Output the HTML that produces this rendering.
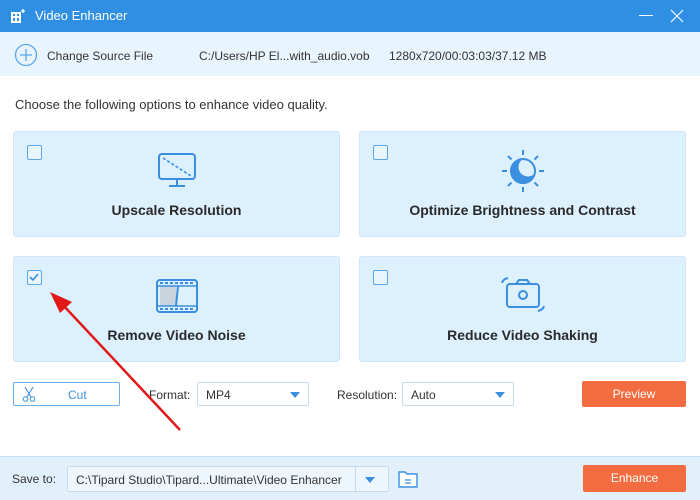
<!DOCTYPE html>
<html><head><meta charset="utf-8"><style>
*{box-sizing:border-box;margin:0;padding:0}
body{width:700px;height:500px;overflow:hidden;background:#fff;font-family:"Liberation Sans",sans-serif;position:relative;color:#333}
.abs{position:absolute}
.title{left:0;top:0;width:700px;height:32px;background:#2f8fe3;color:#fff;font-size:13px}
.src{left:0;top:32px;width:700px;height:44px;background:#e9f5fe;font-size:12px;color:#333}
.card{background:#dcf0fe;border:1px solid #cfe6f8;border-radius:3px;width:327px;height:106px}
.card .cb{position:absolute;left:13px;top:13px;width:15px;height:15px;border:1.5px solid #5aa8ec;border-radius:2px;background:#e9f6ff}
.card .lbl{position:absolute;left:0;right:0;top:70px;text-align:center;font-weight:bold;font-size:14px;color:#2a2a2a}
.card svg{position:absolute;left:50%;top:18px;transform:translateX(-50%)}
.sel{border:1px solid #c8daea;border-radius:2px;background:#fff;height:24px;font-size:12px;padding:5px 8px}
.tri{position:absolute;right:8px;top:9px;width:0;height:0;border-left:5px solid transparent;border-right:5px solid transparent;border-top:6px solid #3a8fe0}
.btn{background:#f36c3f;color:#fff;font-size:12px;text-align:center;border-radius:2px}
</style></head><body>
<div class="abs title">
 <svg class="abs" style="left:10px;top:8px" width="16" height="16" viewBox="0 0 16 16"><rect x="1" y="4" width="10" height="11" fill="#fff"/><rect x="3" y="6" width="2" height="2" fill="#2f8fe3"/><rect x="7" y="6" width="2" height="2" fill="#2f8fe3"/><rect x="3" y="10" width="2" height="3" fill="#2f8fe3"/><rect x="7" y="10" width="2" height="3" fill="#2f8fe3"/><path d="M13 1v4M11 3h4" stroke="#fff" stroke-width="1.3"/></svg>
 <div class="abs" style="left:35px;top:8px">Video Enhancer</div>
 <div class="abs" style="left:639px;top:15px;width:14px;height:1px;background:#fff"></div>
 <svg class="abs" style="left:670px;top:9px" width="14" height="14" viewBox="0 0 14 14"><path d="M1 1L13 13M13 1L1 13" stroke="#fff" stroke-width="1.2"/></svg>
</div>
<div class="abs src">
 <svg class="abs" style="left:14px;top:11px" width="24" height="24" viewBox="0 0 24 24"><circle cx="12" cy="12" r="10.5" fill="none" stroke="#5aa8ec" stroke-width="1.3"/><path d="M12 6v12M6 12h12" stroke="#5aa8ec" stroke-width="1.3"/></svg>
 <div class="abs" style="left:47px;top:17px">Change Source File</div>
 <div class="abs" style="left:199px;top:17px">C:/Users/HP El...with_audio.vob</div>
 <div class="abs" style="left:389px;top:17px">1280x720/00:03:03/37.12 MB</div>
</div>
<div class="abs" style="left:15px;top:97px;font-size:13px;color:#333">Choose the following options to enhance video quality.</div>

<div class="abs card" style="left:13px;top:131px"><div class="cb"></div>
 <svg width="40" height="36" viewBox="0 0 40 36" style="top:20px"><rect x="2" y="2" width="36" height="25" rx="3" fill="none" stroke="#3a8fe0" stroke-width="2"/><path d="M6 6L34 24" stroke="#3a8fe0" stroke-width="1.6" stroke-dasharray="3 2"/><path d="M20 27v6M12 34h16" stroke="#3a8fe0" stroke-width="2"/></svg>
 <div class="lbl">Upscale Resolution</div></div>
<div class="abs card" style="left:359px;top:131px"><div class="cb"></div>
 <svg width="46" height="46" viewBox="0 0 46 46" style="top:16px"><circle cx="23" cy="23" r="12" fill="#3a8fe0"/><circle cx="28" cy="19" r="9.5" fill="#dcf0fe"/><circle cx="23" cy="23" r="12" fill="none" stroke="#3a8fe0" stroke-width="2"/><g stroke="#3a8fe0" stroke-width="2"><path d="M23 2v5M23 39v5M2 23h5M39 23h5M8 8l3.5 3.5M34.5 34.5L38 38M38 8l-3.5 3.5M8 38l3.5-3.5"/></g></svg>
 <div class="lbl">Optimize Brightness and Contrast</div></div>
<div class="abs card" style="left:13px;top:256px"><div class="cb" style="background:#e9f6ff"><svg width="12" height="12" viewBox="0 0 12 12" style="position:absolute;left:0;top:0;transform:none"><path d="M2 6l3 3 5-6" fill="none" stroke="#3a8fe0" stroke-width="1.6"/></svg></div>
 <svg width="42" height="34" viewBox="0 0 42 34" style="top:22px"><rect x="1" y="1" width="40" height="32" rx="3" fill="none" stroke="#3a8fe0" stroke-width="2"/><rect x="4" y="7" width="16" height="20" fill="#c9d4dc"/><path d="M4 4h34M4 30h34" stroke="#3a8fe0" stroke-width="2" stroke-dasharray="3 2"/><path d="M1 7h40M1 27h40" stroke="#3a8fe0" stroke-width="1.5"/><path d="M22 7l-2 20" stroke="#3a8fe0" stroke-width="2"/></svg>
 <div class="lbl">Remove Video Noise</div></div>
<div class="abs card" style="left:359px;top:256px"><div class="cb"></div>
 <svg width="44" height="40" viewBox="0 0 44 40" style="top:18px"><rect x="6" y="9" width="32" height="23" rx="3" fill="none" stroke="#3a8fe0" stroke-width="2"/><path d="M15 9l3-4h8l3 4" fill="none" stroke="#3a8fe0" stroke-width="2"/><circle cx="22" cy="20" r="4" fill="none" stroke="#3a8fe0" stroke-width="2"/><path d="M1 8q1-4 6-5M43 31q-1 4-6 5" fill="none" stroke="#3a8fe0" stroke-width="2"/></svg>
 <div class="lbl">Reduce Video Shaking</div></div>

<div class="abs" style="left:13px;top:382px;width:107px;height:24px;border:1px solid #6aaee8;border-radius:2px;background:#fff">
 <svg class="abs" style="left:7px;top:3px" width="16" height="16" viewBox="0 0 16 16"><path d="M4 1l6 10M12 1L6 11" stroke="#3a8fe0" stroke-width="1.1" fill="none"/><circle cx="4.5" cy="13" r="2.3" fill="none" stroke="#3a8fe0"/><circle cx="11.5" cy="13" r="2.3" fill="none" stroke="#3a8fe0"/></svg>
 <div class="abs" style="left:54px;top:5px;font-size:12px;color:#3a8fe0">Cut</div></div>
<div class="abs" style="left:149px;top:388px;font-size:12px">Format:</div>
<div class="abs sel" style="left:197px;top:382px;width:112px">MP4<div class="tri"></div></div>
<div class="abs" style="left:337px;top:388px;font-size:12px">Resolution:</div>
<div class="abs sel" style="left:402px;top:382px;width:112px">Auto<div class="tri"></div></div>
<div class="abs btn" style="left:582px;top:381px;width:104px;height:26px;line-height:26px">Preview</div>

<svg class="abs" style="left:0;top:0" width="700" height="500"><path d="M180 430L62 304" stroke="#e01818" stroke-width="2.5"/><path d="M50 292L72 302L60 313Z" fill="#e01818"/></svg>

<div class="abs" style="left:0;top:456px;width:700px;height:44px;background:#e2f0fb;border-top:1px solid #c7e0f5"></div>
<div class="abs" style="left:12px;top:472px;font-size:12px">Save to:</div>
<div class="abs sel" style="left:67px;top:466px;width:322px;height:26px;background:#edf6fd;padding:6px 8px">C:\Tipard Studio\Tipard...Ultimate\Video Enhancer
 <div class="abs" style="left:287px;top:0;width:1px;height:24px;background:#c8daea"></div><div class="tri" style="right:13px;top:10px"></div></div>
<svg class="abs" style="left:397px;top:468px" width="22" height="22" viewBox="0 0 22 22"><path d="M2 4h6l2 2h10v13H2z" fill="#fff" stroke="#3a8fe0" stroke-width="1.4"/><path d="M8 12h6M8 15h6" stroke="#3a8fe0" stroke-width="1.3"/></svg>
<div class="abs btn" style="left:583px;top:465px;width:103px;height:27px;line-height:27px">Enhance</div>
</body></html>
